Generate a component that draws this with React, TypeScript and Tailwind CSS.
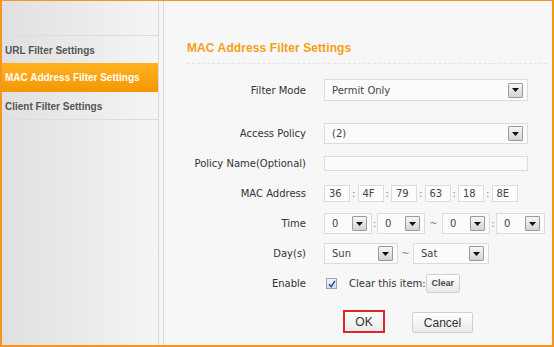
import React from "react";

const Arrow = () => (
  <span className="flex h-[15px] w-[15px] shrink-0 items-center justify-center rounded-[1px] border border-[#9a9a9a] bg-gradient-to-b from-[#f6f6f6] to-[#d4d4d4]">
    <svg width="7" height="4" viewBox="0 0 7 4">
      <path d="M0 0h7L3.5 4z" fill="#111" />
    </svg>
  </span>
);

const Select = ({ value, className }: { value: string; className: string }) => (
  <div
    className={
      "flex items-center justify-between border border-[#dcdcdc] bg-[#fbfbfb] pl-[7px] pr-[4px] text-[#444] " +
      className
    }
  >
    <span>{value}</span>
    <Arrow />
  </div>
);

const Row = ({ label, children, className = "" }: { label: string; children: React.ReactNode; className?: string }) => (
  <div className={"flex h-[30px] items-center " + className}>
    <div className="w-[143px] pr-px text-right text-[#333]">{label}</div>
    <div className="ml-[17px] flex items-center">{children}</div>
  </div>
);

const MacBox = ({ v }: { v: string }) => (
  <div className="flex h-[17px] w-[26px] items-center border border-[#dcdcdc] bg-[#fdfdfd] pl-[4px] text-[#444]">{v}</div>
);

const Sep = ({ c, w }: { c: string; w: string }) => (
  <span className={"text-center text-[#888] " + w}>{c}</span>
);

export default function App() {
  const macs = ["36", "4F", "79", "63", "18", "8E"];
  return (
    <div className="h-[347px] w-[554px] overflow-hidden border-t border-l-2 border-r-2 border-b-2 border-[#f7941d] bg-[#f5f5f5] font-['DejaVu_Sans',sans-serif] text-[10px]">
      <div className="flex h-full">
        {/* Sidebar */}
        <div className="h-full w-[157px] shrink-0 border-r border-[#dadada] bg-gradient-to-r from-[#e0e0e0] to-[#f5f5f5] font-['Liberation_Sans',Arial,sans-serif] text-[10px] font-bold">
          <div className="h-[35px] border-b border-[#dcdcdc]" />
          <div className="flex h-[27px] items-center pl-[3px] pt-[2px] text-[#555]">URL Filter Settings</div>
          <div className="flex h-[29px] items-center bg-gradient-to-b from-[#ffb21e] to-[#f49700] pl-[3px] text-white">
            MAC Address Filter Settings
          </div>
          <div className="flex h-[28px] items-center border-b border-[#dcdcdc] pl-[3px] pt-[1px] text-[#555]">
            Client Filter Settings
          </div>
        </div>
        {/* Content */}
        <div className="ml-[4px] h-full flex-1 border-l border-[#d8d8d8] bg-[#f7f7f7]">
          <div className="ml-[23px] mr-[5px] mt-[38.5px] border-b border-dashed border-[#e2e2e2] pb-[7.5px]">
            <div className="h-[16px] font-['Liberation_Sans',Arial,sans-serif] text-[12px] font-bold leading-[16px] tracking-[0.1px] text-[#f5a01a]">
              MAC Address Filter Settings
            </div>
          </div>
          <div className="mt-[11px]">
            <Row label="Filter Mode">
              <Select value="Permit Only" className="h-[22px] w-[204px]" />
            </Row>
            <Row label="Access Policy" className="mt-[13.5px]">
              <Select value="(2)" className="h-[21px] w-[204px]" />
            </Row>
            <Row label="Policy Name(Optional)">
              <div className="h-[15px] w-[204px] border border-[#dcdcdc] bg-[#fbfbfb]" />
            </Row>
            <Row label="MAC Address">
              {macs.map((m, i) => (
                <React.Fragment key={i}>
                  {i > 0 && <Sep c=":" w="w-[7.5px]" />}
                  <MacBox v={m} />
                </React.Fragment>
              ))}
            </Row>
            <Row label="Time">
              <Select value="0" className="h-[21px] w-[48px]" />
              <Sep c=":" w="w-[5px]" />
              <Select value="0" className="h-[21px] w-[48px]" />
              <Sep c="~" w="w-[17px]" />
              <Select value="0" className="h-[21px] w-[48px]" />
              <Sep c=":" w="w-[6px]" />
              <Select value="0" className="h-[21px] w-[49px]" />
            </Row>
            <Row label="Day(s)">
              <Select value="Sun" className="h-[21px] w-[74px]" />
              <Sep c="~" w="w-[15px]" />
              <Select value="Sat" className="h-[21px] w-[76px]" />
            </Row>
            <Row label="Enable">
              <div className="ml-[2px] flex h-[11px] w-[11px] items-center justify-center border border-[#9aa3b5] bg-gradient-to-b from-[#f0f4fb] to-[#d5dbe8]">
                <svg width="8" height="8" viewBox="0 0 8 8">
                  <path d="M1 4.2 L3.2 6.6 L7 0.8" fill="none" stroke="#2a3f9c" strokeWidth="1.4" />
                </svg>
              </div>
              <span className="ml-[12px] text-[#333]">Clear this item:</span>
              <div className="flex h-[19px] w-[34px] items-center justify-center rounded-[2px] border border-[#cfcfcf] bg-gradient-to-b from-[#ffffff] to-[#e9e9e9] font-['Liberation_Sans',Arial,sans-serif] text-[9px] font-bold text-[#444]">
                Clear
              </div>
            </Row>
          </div>
          <div className="ml-[179px] mt-[11.5px] flex items-start font-['Liberation_Sans',Arial,sans-serif] text-[12px] text-[#333]">
            <div className="flex h-[23px] w-[42px] items-center justify-center border-2 border-[#e0262b] bg-gradient-to-b from-[#ffffff] to-[#ebebeb]">
              OK
            </div>
            <div className="ml-[27px] mt-[2px] flex h-[21px] w-[61px] items-center justify-center rounded-[2px] border border-[#cfcfcf] bg-gradient-to-b from-[#ffffff] to-[#ebebeb]">
              Cancel
            </div>
          </div>
        </div>
      </div>
    </div>
  );
}
